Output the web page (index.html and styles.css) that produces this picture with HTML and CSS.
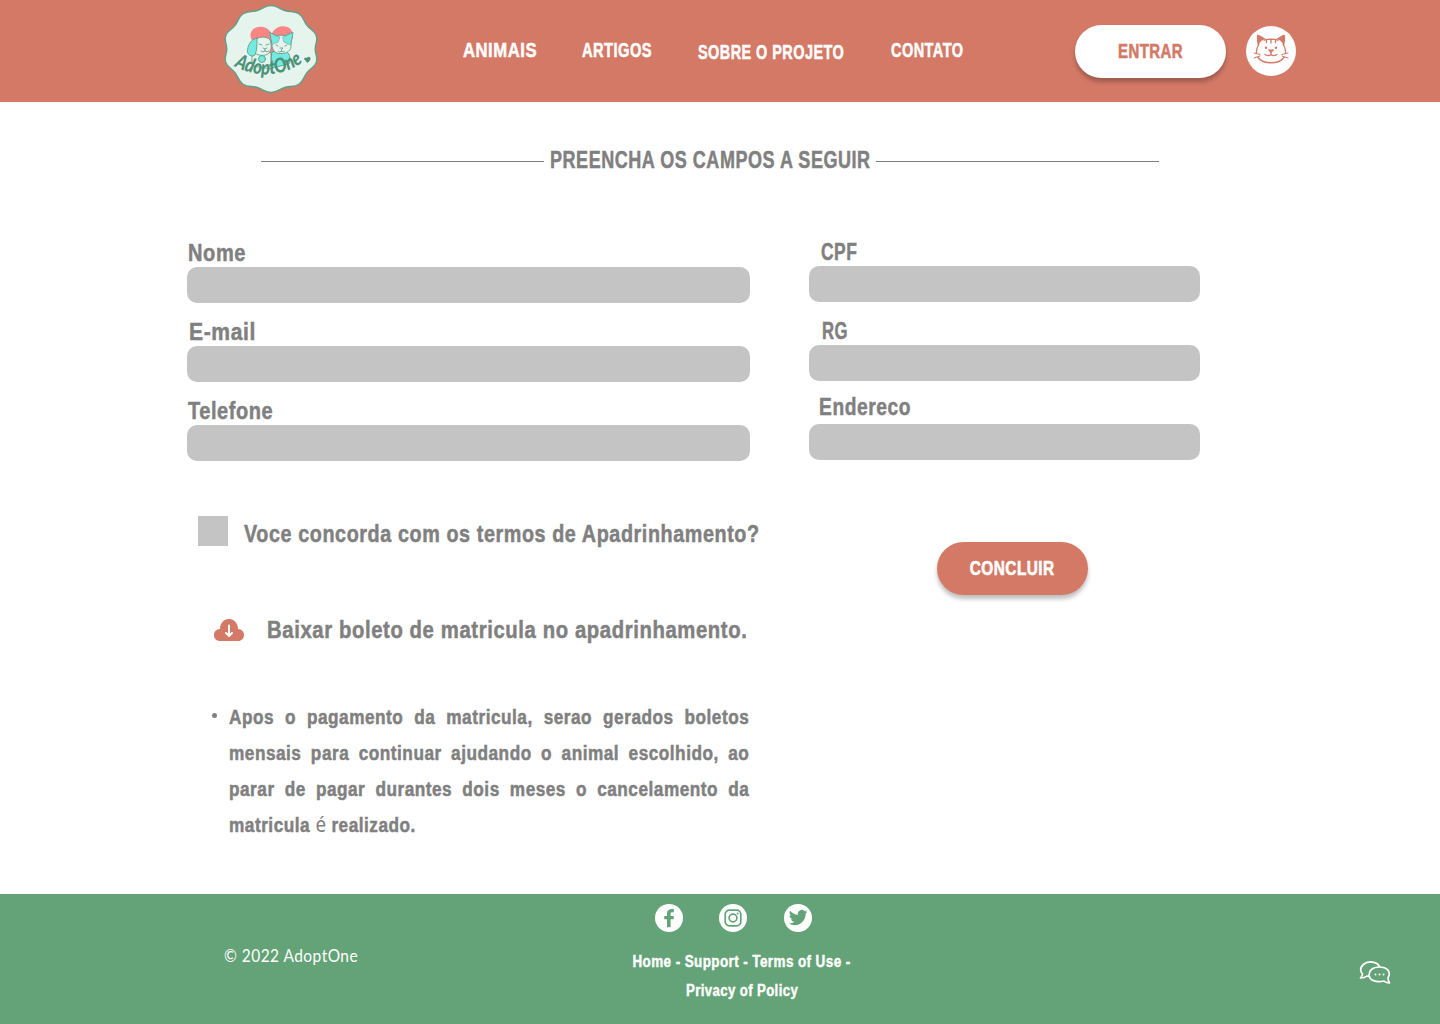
FILE: index.html
```html
<!DOCTYPE html>
<html lang="pt-BR">
<head>
<meta charset="utf-8">
<title>AdoptOne</title>
<link rel="stylesheet" href="styles.css">
</head>
<body>
<header class="header">
  <svg class="logo" width="94" height="92" viewBox="0 0 94 92">
    <path fill="#e6f4ee" stroke="#5fa08a" stroke-width="1.4" d="M47 2.5C53 2.5 55 5.6 60.7 7.5S70 7.3 74.9 10.8 79.3 17.3 82.8 22.2 90.3 26.9 92.2 32.6 91.2 40 91.2 46 94.1 53.7 92.2 59.4 86.3 64.9 82.8 69.8 79.8 77.7 74.9 81.2 66.4 82.6 60.7 84.5 53 89.5 47 89.5 39 86.4 33.3 84.5 24 84.7 19.1 81.2 14.7 74.7 11.2 69.8 3.7 65.1 1.8 59.4 2.8 52 2.8 46 -.1 38.3 1.8 32.6 7.7 27.1 11.2 22.2 14.2 14.3 19.1 10.8 27.6 9.4 33.3 7.5 41 2.5 47 2.5Z"/>
    <path fill="#fb8585" d="M47.700 54C39 47 26.500 41 26.500 32.500C26.500 22 43 20 47.700 31C52 20 69 21 69 32.500C69 41 56 47 47.700 54Z"/>
    <g stroke="#559580" stroke-width=".8" stroke-linejoin="round" stroke-linecap="round">
      <path fill="#e6f4ee" d="M29 50C27 56 28 60 29 63L47 66V50Z"/>
      <path fill="#76eae0" d="M48 49C47 55 47 60 48 65L65 61C67 56 66 51 63 49Z"/>
      <path fill="#e6f4ee" d="M30 38C33 33 44 33 46 37C48 42 48 50 42 52C36 53 31 52 29 47Z"/>
      <path fill="#76eae0" d="M33 35C27 36 23 43 23.500 49C24.500 53 29 54 31 52C33 48 33 40 33 35Z"/>
      <path fill="#e6f4ee" d="M48 38L46 29.500L52 33C55 32 58 32 61 33L69 29.500L67 41C68 48 62 51 57 50.500C51 51 47 47 48 38Z"/>
      <path fill="#76eae0" stroke-width=".5" d="M48 41L46 29.500L52 33L56 34L54 39ZM59 34L61 33L69 29.500L66.500 42L60 39Z"/>
      <circle cx="38" cy="56" r="3.500" fill="#76eae0"/>
      <path fill="none" d="M35 41l3 1M42 42l3-1M39 45l2 1 2-1M41 46v2q-2 2-4 0M41 48q2 2 4 0M52 42l2 1M61 43l2-1M56 45h3l-1.500 1.500v2q-2 1-3 0M57.500 48.500q2 1 3 0"/>
    </g>
    <path id="logo-arc" fill="none" d="M10 63Q46 82 81 58"/>
    <text class="logo-text"><textPath href="#logo-arc" textLength="73" lengthAdjust="spacingAndGlyphs">AdoptOne</textPath></text>
    <path fill="#4b9178" d="M83.500 60l-3.500-4q.5-2.500 3-1 1.500-2.500 3.500 0 .5 2-3 5Z"/>
  </svg>
  <nav class="nav">
    <a class="fit animais">ANIMAIS</a>
    <a class="fit artigos">ARTIGOS</a>
    <a class="fit sobre">SOBRE O PROJETO</a>
    <a class="fit contato">CONTATO</a>
  </nav>
  <button class="btn btn-light"><span>ENTRAR</span></button>
  <svg class="avatar" width="50" height="50" viewBox="0 0 50 50">
    <circle cx="25" cy="25" r="25" fill="#fff"/>
    <g fill="none" stroke="#d47966" stroke-width="1.300" stroke-linecap="round" stroke-linejoin="round">
      <path d="M18 14.200Q25 12 32 14.200M13 18Q10 23 10.500 27M37 18Q40 23 39.500 27M12 31.500C17 38.500 33 38.500 38 31.500M20.500 14v2.500M25 13.500v3.500M29.500 14v2.500M19 28.500q4 2.500 6-.2 2 2.700 6 .2M25 25v3"/>
      <path stroke-width="1" d="M8 27l6 1.500M8 32l6-2M42 27l-6 1.500M42 32l-6-2"/>
    </g>
    <path fill="#d47966" d="M11 9.500Q11 8.500 13 9L20 13Q14 14 12 20Q10.500 15 11 9.500ZM39 9.500Q39 8.500 37 9L30 13Q36 14 38 20Q39.500 15 39 9.500ZM22 23.500h6q.5 1-3 3.500-3.500-2.500-3-3.500Z"/>
    <circle cx="20" cy="21.700" r="1.200" fill="#d47966"/><circle cx="30" cy="21.700" r="1.200" fill="#d47966"/>
  </svg>
</header>

<main class="main">
  <h1 class="title"><span class="fit">PREENCHA OS CAMPOS A SEGUIR</span></h1>
  <form class="form">
    <div class="column">
      <label class="field nome"><span class="fit">Nome</span><input></label>
      <label class="field email"><span class="fit">E-mail</span><input></label>
      <label class="field telefone"><span class="fit">Telefone</span><input></label>
    </div>
    <div class="column right">
      <label class="field cpf"><span class="fit">CPF</span><input></label>
      <label class="field rg"><span class="fit">RG</span><input></label>
      <label class="field endereco"><span class="fit">Endereco</span><input></label>
    </div>
  </form>
  <div class="lower">
    <div class="details">
      <div class="terms"><i class="checkbox"></i><span class="fit">Voce concorda com os termos de Apadrinhamento?</span></div>
      <div class="download">
        <svg width="30" height="22" viewBox="0 0 30 22"><path fill="#d47966" d="M6 22C2.500 22 0 19.500 0 16S2.500 10.200 6 10C6 4.500 9.500 0 15 0S24 4.500 24 10C27.500 10.200 30 12.500 30 16S27.500 22 24 22Z"/><path fill="none" stroke="#fff" stroke-width="1.900" stroke-linecap="round" stroke-linejoin="round" d="M15 6.500v10M12 14l3 3 3-3"/></svg>
        <span class="fit">Baixar boleto de matricula no apadrinhamento.</span>
      </div>
      <div class="note">
        <i class="bullet"></i>
        <p class="fit"><span>Apos o pagamento da matricula, serao gerados boletos</span> <span>mensais para continuar ajudando o animal escolhido, ao</span> <span>parar de pagar durantes dois meses o cancelamento da</span> <span class="last">matricula <em>é</em> realizado.</span></p>
      </div>
    </div>
    <button class="btn btn-solid"><span>CONCLUIR</span></button>
  </div>
</main>

<footer class="footer">
  <p class="copyright"><span class="fit">© 2022 AdoptOne</span></p>
  <div class="footer-center">
    <div class="social">
      <svg width="28" height="28" viewBox="0 0 28 28"><circle cx="14" cy="14" r="14" fill="#fff"/><path fill="#64a377" d="M12 23.300V15.200H9.200V12H12V9.500C12 6.500 14 4.800 18.800 5.100V8.200C16.500 8 15.600 8.300 15.600 9.800V12H18.700V15.200H15.600V23.300Z"/></svg>
      <svg width="28" height="28" viewBox="0 0 28 28"><circle cx="14" cy="14" r="14" fill="#fff"/><g fill="none" stroke="#64a377" stroke-width="1.700"><rect x="6.200" y="6.200" width="15.600" height="15.600" rx="4.200"/><circle cx="14" cy="14" r="3.900"/></g><circle cx="18.600" cy="9.500" r="1" fill="#64a377"/></svg>
      <svg width="28" height="28" viewBox="0 0 28 28"><circle cx="14" cy="14" r="14" fill="#fff"/><path fill="#64a377" transform="translate(4.800 4.200) scale(.78)" d="M23.950 4.570a10 10 0 0 1-2.820.78 4.960 4.960 0 0 0 2.160-2.730c-.95.560-2 .960-3.130 1.190a4.920 4.920 0 0 0-8.380 4.480C7.690 8.100 4.070 6.130 1.640 3.160a4.820 4.820 0 0 0-.67 2.480c0 1.710.87 3.210 2.190 4.100a4.900 4.900 0 0 1-2.230-.62v.06a4.920 4.920 0 0 0 3.950 4.830 5 5 0 0 1-2.210.08 4.940 4.940 0 0 0 4.600 3.420A9.870 9.870 0 0 1 0 19.540a13.990 13.990 0 0 0 7.550 2.210c9.050 0 14-7.500 14-13.980 0-.21 0-.42-.02-.63a9.940 9.940 0 0 0 2.460-2.550z"/></svg>
    </div>
    <p class="links"><span>Home - Support - Terms of Use -</span><span class="privacy">Privacy of Policy</span></p>
  </div>
  <svg class="chat" width="32" height="25" viewBox="0 0 32 25"><g fill="none" stroke="#fff" stroke-width="1.700" stroke-linejoin="round" stroke-linecap="round"><path d="M20.500 5.500C18 0 9 0 5 3C0 7 1.500 11 3.500 13Q3.500 15 1.500 17Q6 17 8 15L10.500 15.500"/><path d="M29 17C33 10 27 6 20.500 6C13 6 10 10 10 14C10 19 17 22 25 20Q27 22 30.500 22Q29 20 29 17Z"/></g><g fill="#fff"><circle cx="16.500" cy="13.500" r="1"/><circle cx="20.500" cy="13.500" r="1"/><circle cx="24.500" cy="13.500" r="1"/></g></svg>
</footer>
</body>
</html>
```
FILE: styles.css
```css
* { box-sizing: border-box; }
body {
  margin: 0;
  width: 1440px;
  height: 1024px;
  display: flex;
  flex-direction: column;
  overflow: hidden;
  background: #fff;
  color: #808080;
  font: bold 24px/30px "Liberation Sans", Arial, sans-serif;
}
p, h1 { margin: 0; }
a, label, span, button { white-space: nowrap; }

/* Condensed lettering: --s is the horizontal scale of each text */
.fit {
  transform: scaleX(var(--s, .82));
  transform-origin: 0 50%;
  letter-spacing: .03em;
  -webkit-text-stroke: .5px currentColor;
}

.header {
  display: flex;
  align-items: flex-start;
  height: 102px;
  padding-left: 224px;
  background: #d47966;
  color: #fff;
}
.logo { margin-top: 3px; flex: none; overflow: visible; }
.logo-text { font: italic 900 20px "Lato", sans-serif; fill: #4b9178; }
.nav {
  display: grid;
  grid-template-columns: 119px 116px 193px 184px;
  margin: 35px 0 0 145px;
  font-size: 20px;
}
.animais { --s: .835; }
.artigos { --s: .735; }
.sobre { --s: .724; padding-top: 2px; }
.contato { --s: .727; }
.btn {
  display: flex;
  flex: none;
  align-items: center;
  justify-content: center;
  width: 151px;
  height: 53px;
  padding: 0 0 2px;
  border: 0;
  border-radius: 27px;
  font: inherit;
  font-size: 20px;
  letter-spacing: .03em;
  -webkit-text-stroke: .6px currentColor;
  box-shadow: 0 4px 4px rgba(0, 0, 0, .25);
}
.btn-light { margin-top: 25px; background: #fff; color: #d47966; }
.btn-light span { transform: scaleX(.748); }
.btn-solid { margin: 32px 0 0 178px; background: #d47966; color: #fff; }
.btn-solid span { transform: scaleX(.77); }
.avatar { margin: 26px 0 0 20px; flex: none; }

.main { height: 792px; }
.title {
  display: flex;
  align-items: center;
  width: 898px;
  height: 30px;
  margin: 44px 0 0 261px;
  font-size: 24px;
}
.title::before, .title::after { content: ""; flex: none; width: 283px; height: 1px; margin-top: 1px; background: #808080; }
.title span { --s: .75; flex: none; width: 326px; margin-left: 6px; padding-bottom: 2px; }

.form { display: flex; gap: 59px; margin: 62px 0 0 187px; }
.column { width: 563px; }
.right { width: 391px; margin-top: -1px; }
.field { display: flex; flex-direction: column; height: 79px; }
.field span { height: 29px; margin-left: 1px; }
.field input { width: 100%; height: 36px; border: 0; border-radius: 10px; background: #c4c4c4; }
.nome span { --s: .834; }
.email span { --s: .878; margin-left: 2px; }
.telefone span { --s: .83; }
.cpf span { --s: .727; margin-left: 12px; }
.rg span { --s: .695; margin-left: 13px; }
.endereco span { --s: .8; margin-left: 10px; line-height: 24px; }

.lower { display: flex; align-items: flex-start; padding-left: 187px; margin-top: 35px; }
.details { width: 572px; }
.terms { display: flex; gap: 16px; padding: 6px 0 0 11px; }
.terms span { --s: .823; padding-top: 3px; }
.checkbox { flex: none; width: 30px; height: 30px; background: #c4c4c4; }
.download { display: flex; align-items: center; gap: 23px; margin: 66px 0 0 27px; }
.download svg { flex: none; }
.download span { --s: .845; }
.note { display: flex; margin: 54px 0 0 25px; font-size: 20px; line-height: 36px; }
.bullet { flex: none; width: 5px; height: 5px; margin: 14px 12px 0 0; border-radius: 50%; background: #808080; }
.note p { --s: .86; flex: none; width: 605px; }
.note span { display: block; text-align: justify; text-align-last: justify; }
.note .last { text-align-last: left; }
.note em { font: 22px/30px "Noto Sans", sans-serif; letter-spacing: 0; -webkit-text-stroke: 0; }

.footer { display: flex; height: 130px; padding-left: 224px; background: #64a377; color: #fff; }
.copyright { width: 398px; padding-top: 46px; font: 400 18px/30px "Lato", sans-serif; }
.copyright span { --s: .86; display: block; -webkit-text-stroke: 0; }
.footer-center { width: 240px; padding-top: 10px; }
.social { display: flex; gap: 36px; padding-left: 33px; }
.social svg { flex: none; }
.social svg:last-child { margin-left: 1px; }
.links {
  display: flex;
  flex-direction: column;
  align-items: center;
  padding-top: 15px;
  font-size: 16px;
  line-height: 29px;
  letter-spacing: .03em;
  -webkit-text-stroke: .4px currentColor;
}
.links span { transform: scaleX(.842); }
.links .privacy { transform: scaleX(.823); }
.chat { margin: 67px 0 0 497px; }
```
